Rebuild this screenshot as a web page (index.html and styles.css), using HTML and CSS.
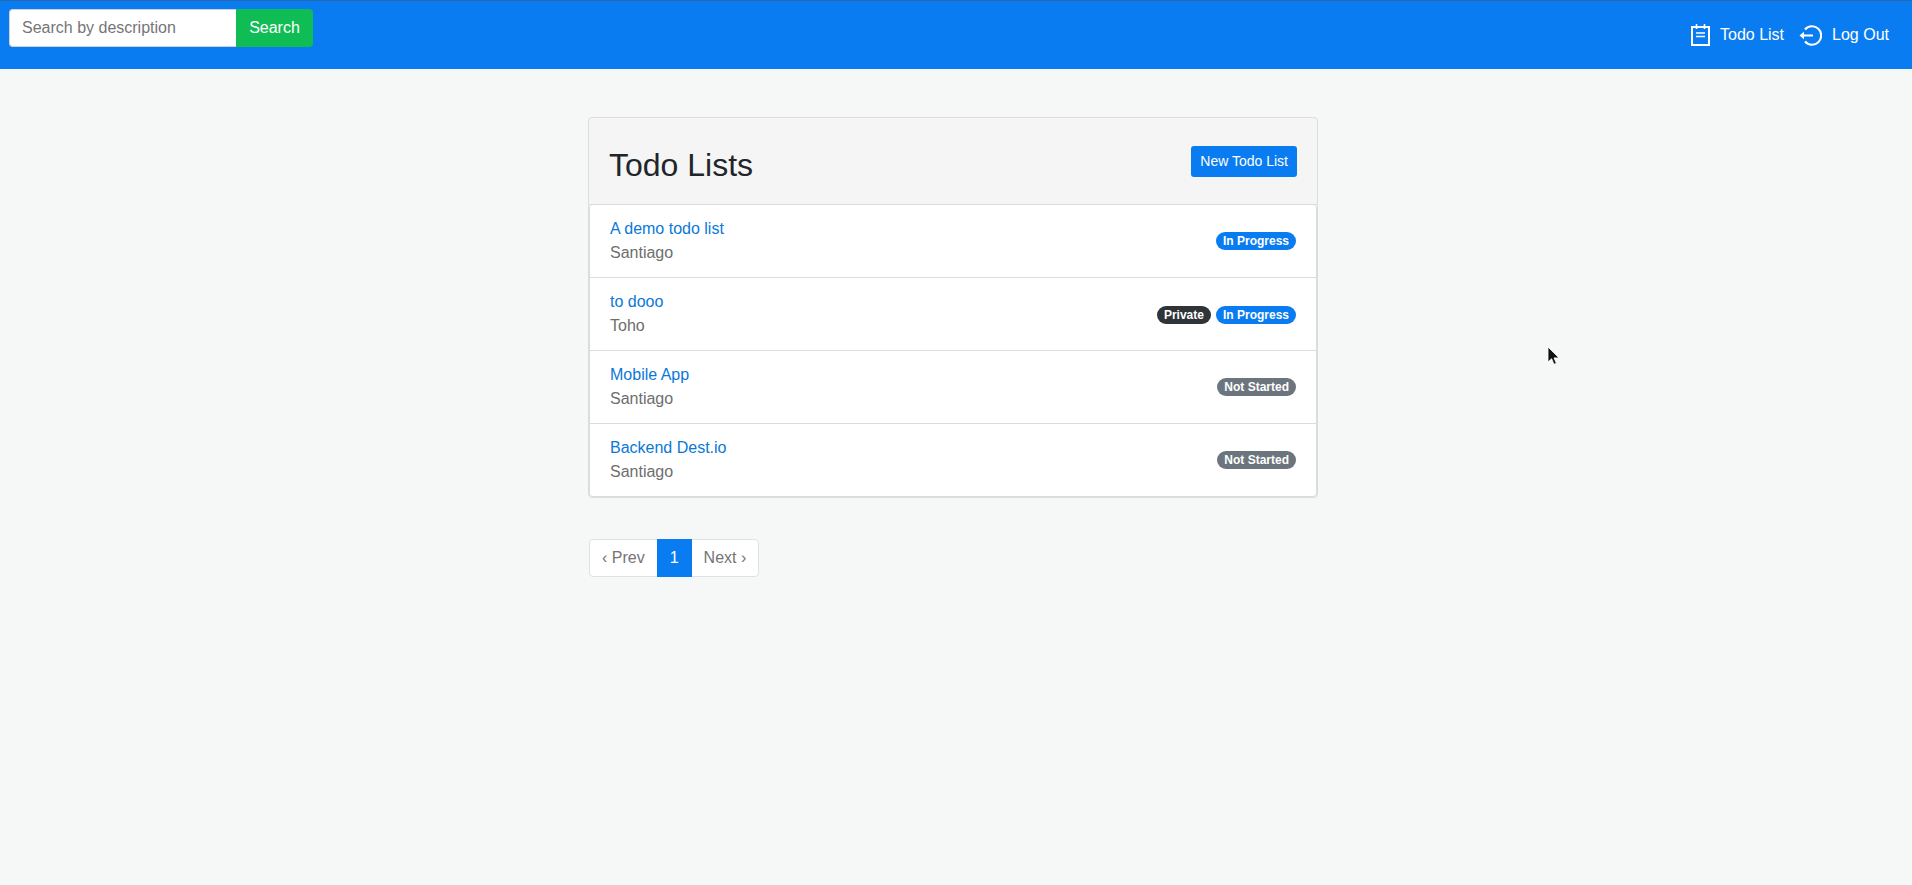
FILE: index.html
```html
<!DOCTYPE html>
<html lang="en">
<head>
  <meta charset="UTF-8" />
  <title>Todo Lists</title>
  <link rel="stylesheet" href="styles.css">
</head>
<body>
  <nav class="navbar">
    <form class="search-form">
      <input class="search-input" type="text" placeholder="Search by description" />
      <button class="search-btn" type="button">Search</button>
    </form>
    <div class="nav-links">
      <a class="nav-link" href="#">
        <svg class="nav-icon" width="19" height="22" viewBox="0 0 19 22" fill="none" stroke="#fff" stroke-width="2">
          <rect x="1" y="3" width="17" height="18" />
          <path d="M5.5 0v5M13.5 0v5" stroke-width="1.6" />
          <path d="M5 9h9M5 12.5h9" stroke-width="1.4" />
        </svg>
        <span>Todo List</span>
      </a>
      <a class="nav-link" href="#">
        <svg class="nav-icon" width="23" height="23" viewBox="0 0 23 23" fill="none" stroke="#fff" stroke-width="2">
          <path d="M6 5.5a9.2 9.2 0 1 1 0 12" />
          <path d="M3 11.5h11" />
          <path d="M0.5 11.5l4.5-3.8v7.6z" fill="#fff" stroke="none" />
        </svg>
        <span>Log Out</span>
      </a>
    </div>
  </nav>

  <main class="content">
    <section class="card">
      <header class="card-header">
        <h1>Todo Lists</h1>
        <a class="new-btn" href="#">New Todo List</a>
      </header>
      <ul class="todo-list">
        <li class="todo-item">
          <div>
            <a class="todo-title" href="#">A demo todo list</a>
            <div class="todo-owner">Santiago</div>
          </div>
          <div class="badges"><span class="badge badge-primary">In Progress</span></div>
        </li>
        <li class="todo-item">
          <div>
            <a class="todo-title" href="#">to dooo</a>
            <div class="todo-owner">Toho</div>
          </div>
          <div class="badges badges-double"><span class="badge badge-dark">Private</span><span class="badge badge-primary">In Progress</span></div>
        </li>
        <li class="todo-item">
          <div>
            <a class="todo-title" href="#">Mobile App</a>
            <div class="todo-owner">Santiago</div>
          </div>
          <div class="badges"><span class="badge badge-secondary">Not Started</span></div>
        </li>
        <li class="todo-item">
          <div>
            <a class="todo-title" href="#">Backend Dest.io</a>
            <div class="todo-owner">Santiago</div>
          </div>
          <div class="badges"><span class="badge badge-secondary">Not Started</span></div>
        </li>
      </ul>
    </section>

    <div class="pagination">
      <a class="page-link" href="#">‹ Prev</a>
      <a class="page-link active" href="#">1</a>
      <a class="page-link" href="#">Next ›</a>
    </div>
  </main>

  <svg class="cursor" width="14" height="20" viewBox="0 0 14 20">
    <path d="M1 1v15l3.6-3.3 2.4 5.6 2.4-1-2.4-5.4h5z" fill="#111" stroke="#fff" stroke-width="0.8" />
  </svg>
</body>
</html>
```

FILE: styles.css
```css
* {
  box-sizing: border-box;
}
body {
  margin: 0;
  min-height: 885px;
  background: #f5f8f6;
  font-family: "Liberation Sans", Arial, sans-serif;
  font-size: 16px;
  line-height: 24px;
  color: #212529;
}
a {
  text-decoration: none;
}
.navbar {
  height: 69px;
  background: #0a7cf1;
  border-top: 1px solid #2a66a8;
  padding: 8px 23px 0 9px;
  display: flex;
  justify-content: space-between;
  align-items: flex-start;
}
.search-form {
  display: flex;
}
.search-input {
  width: 227px;
  height: 38px;
  padding: 6px 12px;
  border: 1px solid #ced4da;
  border-right: none;
  border-radius: 4px 0 0 4px;
  font: inherit;
  background: #fff;
  color: #495057;
}
.search-input::placeholder {
  color: #757575;
  opacity: 1;
}
.search-btn {
  width: 77px;
  height: 38px;
  border: none;
  border-radius: 0 4px 4px 0;
  background: #10bd55;
  color: #fff;
  font: inherit;
  padding: 0;
}
.nav-links {
  display: flex;
  gap: 15px;
  margin-top: 14px;
}
.nav-link {
  display: flex;
  align-items: center;
  gap: 10px;
  height: 24px;
  color: #fff;
}
.nav-icon {
  display: block;
}
.content {
  width: 730px;
  margin-left: 588px;
  padding-top: 48px;
}
.card {
  border: 1px solid #dcdcdc;
  border-radius: 4px;
  background: #f5f5f5;
}
.card-header {
  height: 87px;
  padding: 28px 20px 0 20px;
  display: flex;
  justify-content: space-between;
  align-items: flex-start;
  border-bottom: 1px solid #dcdcdc;
}
.card-header h1 {
  margin: 0;
  font-size: 32px;
  line-height: 38px;
  font-weight: 400;
  color: #212529;
}
.new-btn {
  display: block;
  background: #0a7cf1;
  color: #fff;
  font-size: 14px;
  line-height: 21px;
  padding: 5px 9px;
  border-radius: 3px;
}
.todo-list {
  list-style: none;
  margin: 0;
  padding: 0;
  background: #fff;
  border-left: 1px solid #dcdcdc;
  border-right: 1px solid #dcdcdc;
  border-bottom: 1px solid #dcdcdc;
  border-radius: 4px;
}
.todo-item {
  height: 73px;
  padding: 12px 20px;
  display: flex;
  justify-content: space-between;
  align-items: center;
  border-bottom: 1px solid #dcdcdc;
}
.todo-item:last-child {
  border-bottom: none;
  height: 72px;
}
.todo-title {
  display: block;
  color: #0a78d8;
}
.todo-owner {
  color: #6e6e6e;
}
.badges {
  display: flex;
  gap: 5px;
}
.badges-double {
  margin-top: 2px;
}
.badge {
  display: block;
  height: 18px;
  padding: 0 7px;
  border-radius: 10px;
  font-size: 12px;
  line-height: 18px;
  font-weight: 700;
  color: #fff;
}
.badge-primary {
  background: #0a7cf1;
}
.badge-dark {
  background: #2f3438;
}
.badge-secondary {
  background: #6c757d;
}
.pagination {
  display: inline-flex;
  margin-top: 41px;
  margin-left: 1px;
  border-radius: 4px;
  border: 1px solid #dee2e6;
  background: #fff;
  height: 38px;
}
.page-link {
  padding: 6px 12px;
  color: #757575;
}
.page-link.active {
  margin: -1px 0;
  padding: 7px 13px;
  background: #0a7cf1;
  color: #fff;
}
.cursor {
  position: absolute;
  left: 1547px;
  top: 346px;
}
```
